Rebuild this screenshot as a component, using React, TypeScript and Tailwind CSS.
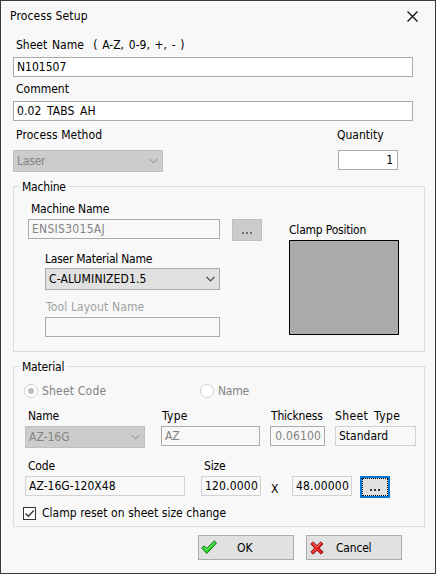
import type { ReactNode } from "react";

function Label({ children, className = "" }: { children: ReactNode; className?: string }) {
  return <span className={`block h-4 shrink-0 whitespace-pre leading-4 ${className}`}>{children}</span>;
}

function Field({ children, className = "" }: { children?: ReactNode; className?: string }) {
  return <div className={`flex h-5 shrink-0 items-center whitespace-pre border ${className}`}>{children}</div>;
}

function Combo({ children, className = "", arrow }: { children: ReactNode; className?: string; arrow: string }) {
  return (
    <div className={`flex h-[22px] shrink-0 items-center justify-between border pl-[3px] pr-1 ${className}`}>
      <span>{children}</span>
      <svg width="9" height="6" viewBox="0 0 9 6" fill="none" stroke={arrow} strokeWidth="1.2">
        <path d="M0.5 0.8 4.5 4.8 8.5 0.8" />
      </svg>
    </div>
  );
}

function Dots({ color }: { color: string }) {
  return (
    <svg width="10" height="2" viewBox="0 0 10 2" fill={color}>
      <rect x="0" width="2" height="2" />
      <rect x="4" width="2" height="2" />
      <rect x="8" width="2" height="2" />
    </svg>
  );
}

function Group({ title, children, className = "" }: { title: string; children: ReactNode; className?: string }) {
  return (
    <section className={`relative ml-3 w-[412px] shrink-0 border border-[#dcdcdc] ${className}`}>
      <span className="absolute -top-2 left-1.5 bg-[#f8f8f8] pl-0.5 pr-[3px] leading-4">{title}</span>
      {children}
    </section>
  );
}

function Radio({ checked = false }: { checked?: boolean }) {
  return (
    <span className="flex size-3.5 items-center justify-center rounded-full border border-[#d0d0d0] bg-white">
      {checked && <span className="size-1.5 rounded-full bg-[#bcbcbc]" />}
    </span>
  );
}

export default function App() {
  return (
    <main className="flex h-[574px] w-[436px] flex-col overflow-hidden border border-[#3c3a3c] bg-[#f8f8f8] font-['DejaVu_Sans_Condensed','DejaVu_Sans',sans-serif] text-[12px] leading-4 tracking-[-0.2px] text-black [font-stretch:condensed]">
      <header className="flex h-[35px] shrink-0 items-start justify-between pl-[9px] pr-[17px] pt-[7px]">
        <Label className="tracking-[0.15px]">Process Setup</Label>
        <svg className="mt-[3px]" width="11" height="11" viewBox="0 0 11 11" stroke="#111" strokeWidth="1.3">
          <path d="M0.5 0.5 10.5 10.5M10.5 0.5 0.5 10.5" />
        </svg>
      </header>

      <Label className="ml-[15px] mt-px tracking-normal [word-spacing:1.3px]">Sheet Name  ( A-Z, 0-9, +, - )</Label>
      <Field className="ml-3 mt-1 w-[400px] border-[#ababab] bg-white pl-[3px] tracking-normal">N101507</Field>
      <Label className="ml-[15px] mt-1 tracking-normal">Comment</Label>
      <Field className="ml-3 mt-1 w-[400px] border-[#ababab] bg-white pl-[3px] tracking-[0.1px] [word-spacing:2px]">0.02 TABS AH</Field>

      <div className="mt-1.5 flex h-4 shrink-0 tracking-[0.1px]">
        <Label className="ml-[15px] w-[321px]">Process Method</Label>
        <Label className="tracking-normal">Quantity</Label>
      </div>
      <div className="mt-[7px] flex h-[22px] shrink-0">
        <Combo className="ml-3 w-[150px] border-[#bfbfbf] bg-[#cccccc] text-[#838383]" arrow="#a0a0a0">Laser</Combo>
        <Field className="ml-[175px] w-[60px] justify-end border-[#ababab] bg-white pr-1">1</Field>
      </div>

      <Group title="Machine" className="mt-3.5 flex h-[166px]">
        <div className="w-[206px] shrink-0">
          <Label className="ml-[17px] mt-3.5">Machine Name</Label>
          <Field className="ml-3.5 mt-0.5 w-48 border-[#ababab] pl-[3px] tracking-[0.28px] text-[#838383]">ENSIS3015AJ</Field>
          <Label className="ml-[31px] mt-3 tracking-[-0.25px]">Laser Material Name</Label>
          <Combo className="ml-[31px] mt-px w-[175px] border-[#ababab] bg-[#e1e1e1] tracking-[0.15px]" arrow="#444">C-ALUMINIZED1.5</Combo>
          <Label className="ml-8 mt-[9px] tracking-[0.14px] text-[#a0a0a0]">Tool Layout Name</Label>
          <Field className="ml-[31px] mt-0.5 w-[175px] border-[#ababab]" />
        </div>
        <div className="ml-3 mt-8 flex h-[22px] w-[30px] shrink-0 items-center justify-center border border-[#bfbfbf] bg-[#cccccc] pt-[5px]">
          <Dots color="#707078" />
        </div>
        <div className="ml-[27px] mt-[35px]">
          <Label>Clamp Position</Label>
          <div className="mt-0.5 h-[95px] w-[110px] border border-black bg-[#ababab]" />
        </div>
      </Group>

      <Group title="Material" className="mt-3.5 flex h-[161px] flex-col">
        <div className="ml-2.5 mt-4 flex h-4 items-center text-[#838383]">
          <Radio checked />
          <Label className="ml-1 w-[158px] tracking-[0.2px]">Sheet Code</Label>
          <Radio />
          <Label className="ml-1">Name</Label>
        </div>
        <div className="mt-[9px] flex h-4 shrink-0">
          <Label className="ml-3.5 w-[134px]">Name</Label>
          <Label className="w-[109px] tracking-[0.3px]">Type</Label>
          <Label className="w-16">Thickness</Label>
          <Label className="tracking-[0.4px] [word-spacing:2px]">Sheet Type</Label>
        </div>
        <div className="mt-0.5 flex h-[22px] shrink-0">
          <Combo className="ml-[11px] w-[120px] border-[#bfbfbf] bg-[#cccccc] tracking-normal text-[#838383]" arrow="#a0a0a0">AZ-16G</Combo>
          <Field className="ml-4 w-[99px] border-[#ababab] pl-[3px] text-[#838383]">AZ</Field>
          <Field className="ml-2.5 w-[55px] justify-end border-[#ababab] pr-[3px] tracking-[0.15px] text-[#838383]">0.06100</Field>
          <Field className="ml-2.5 w-[81px] border-[#d2d2d2] pl-[3px] tracking-normal">Standard</Field>
        </div>
        <div className="mt-2.5 flex h-4 shrink-0">
          <Label className="ml-3.5 w-44">Code</Label>
          <Label>Size</Label>
        </div>
        <div className="mt-0.5 flex h-[22px] shrink-0">
          <Field className="ml-[11px] w-40 border-[#d2d2d2] pl-[3px] tracking-[0.03px]">AZ-16G-120X48</Field>
          <Field className="ml-4 w-[60px] justify-end border-[#d2d2d2] pr-0.5 tracking-[0.2px]">120.0000</Field>
          <Label className="ml-2.5 mt-[5px] w-[21px]">X</Label>
          <Field className="w-[60px] justify-end border-[#d2d2d2] pr-0.5 tracking-[0.2px]">48.00000</Field>
          <div className="ml-2 w-[30px] border-2 border-[#0078d7] bg-[#e1e1e1]">
            <div className="flex h-[18px] items-center justify-center border border-dotted border-black pt-[5px]">
              <Dots color="#333" />
            </div>
          </div>
        </div>
        <div className="ml-[9px] mt-[7px] flex h-4 shrink-0 items-center">
          <span className="flex size-[13px] items-center justify-center border border-[#333] bg-white">
            <svg width="11" height="11" viewBox="0 0 11 11" fill="none" stroke="#333" strokeWidth="1.3">
              <path d="M1.5 5.5 4.3 8.3 9.8 2.5" />
            </svg>
          </span>
          <Label className="ml-1.5 tracking-normal [word-spacing:0.2px]">Clamp reset on sheet size change</Label>
        </div>
      </Group>

      <footer className="ml-[197px] mt-2 flex h-[25px] shrink-0 gap-3">
        <button className="flex w-24 items-center border border-[#ababab] bg-[#e1e1e1] pl-0.5">
          <svg width="17" height="15" viewBox="0 0 17 15" strokeLinejoin="round">
            <path d="M0.8 8 3 5.8 5.6 8.4 13.4 1 15.5 3 5.8 13.5Z" fill="#20dc20" stroke="#176b17" />
            <path d="M3 7.3 5.7 10 13.6 2.5" fill="none" stroke="#7cf57c" />
          </svg>
          <span className="ml-[19px] tracking-normal">OK</span>
        </button>
        <button className="flex w-24 items-center border border-[#ababab] bg-[#e1e1e1] pl-[3px]">
          <svg width="14" height="14" viewBox="0 0 14 14" strokeLinejoin="round">
            <path d="M3 0.8 7 4.6 10.8 0.9 13 3 9.2 6.9 13.2 11 11 13.2 7 9.3 3 13.2 0.8 11 4.7 7 0.8 3Z" fill="#ee2020" stroke="#8c1515" />
            <path d="M3 2.2 6.9 6 10.8 2.2M3 10.6 5.5 8" fill="none" stroke="#ff8080" />
          </svg>
          <span className="ml-3">Cancel</span>
        </button>
      </footer>
    </main>
  );
}
